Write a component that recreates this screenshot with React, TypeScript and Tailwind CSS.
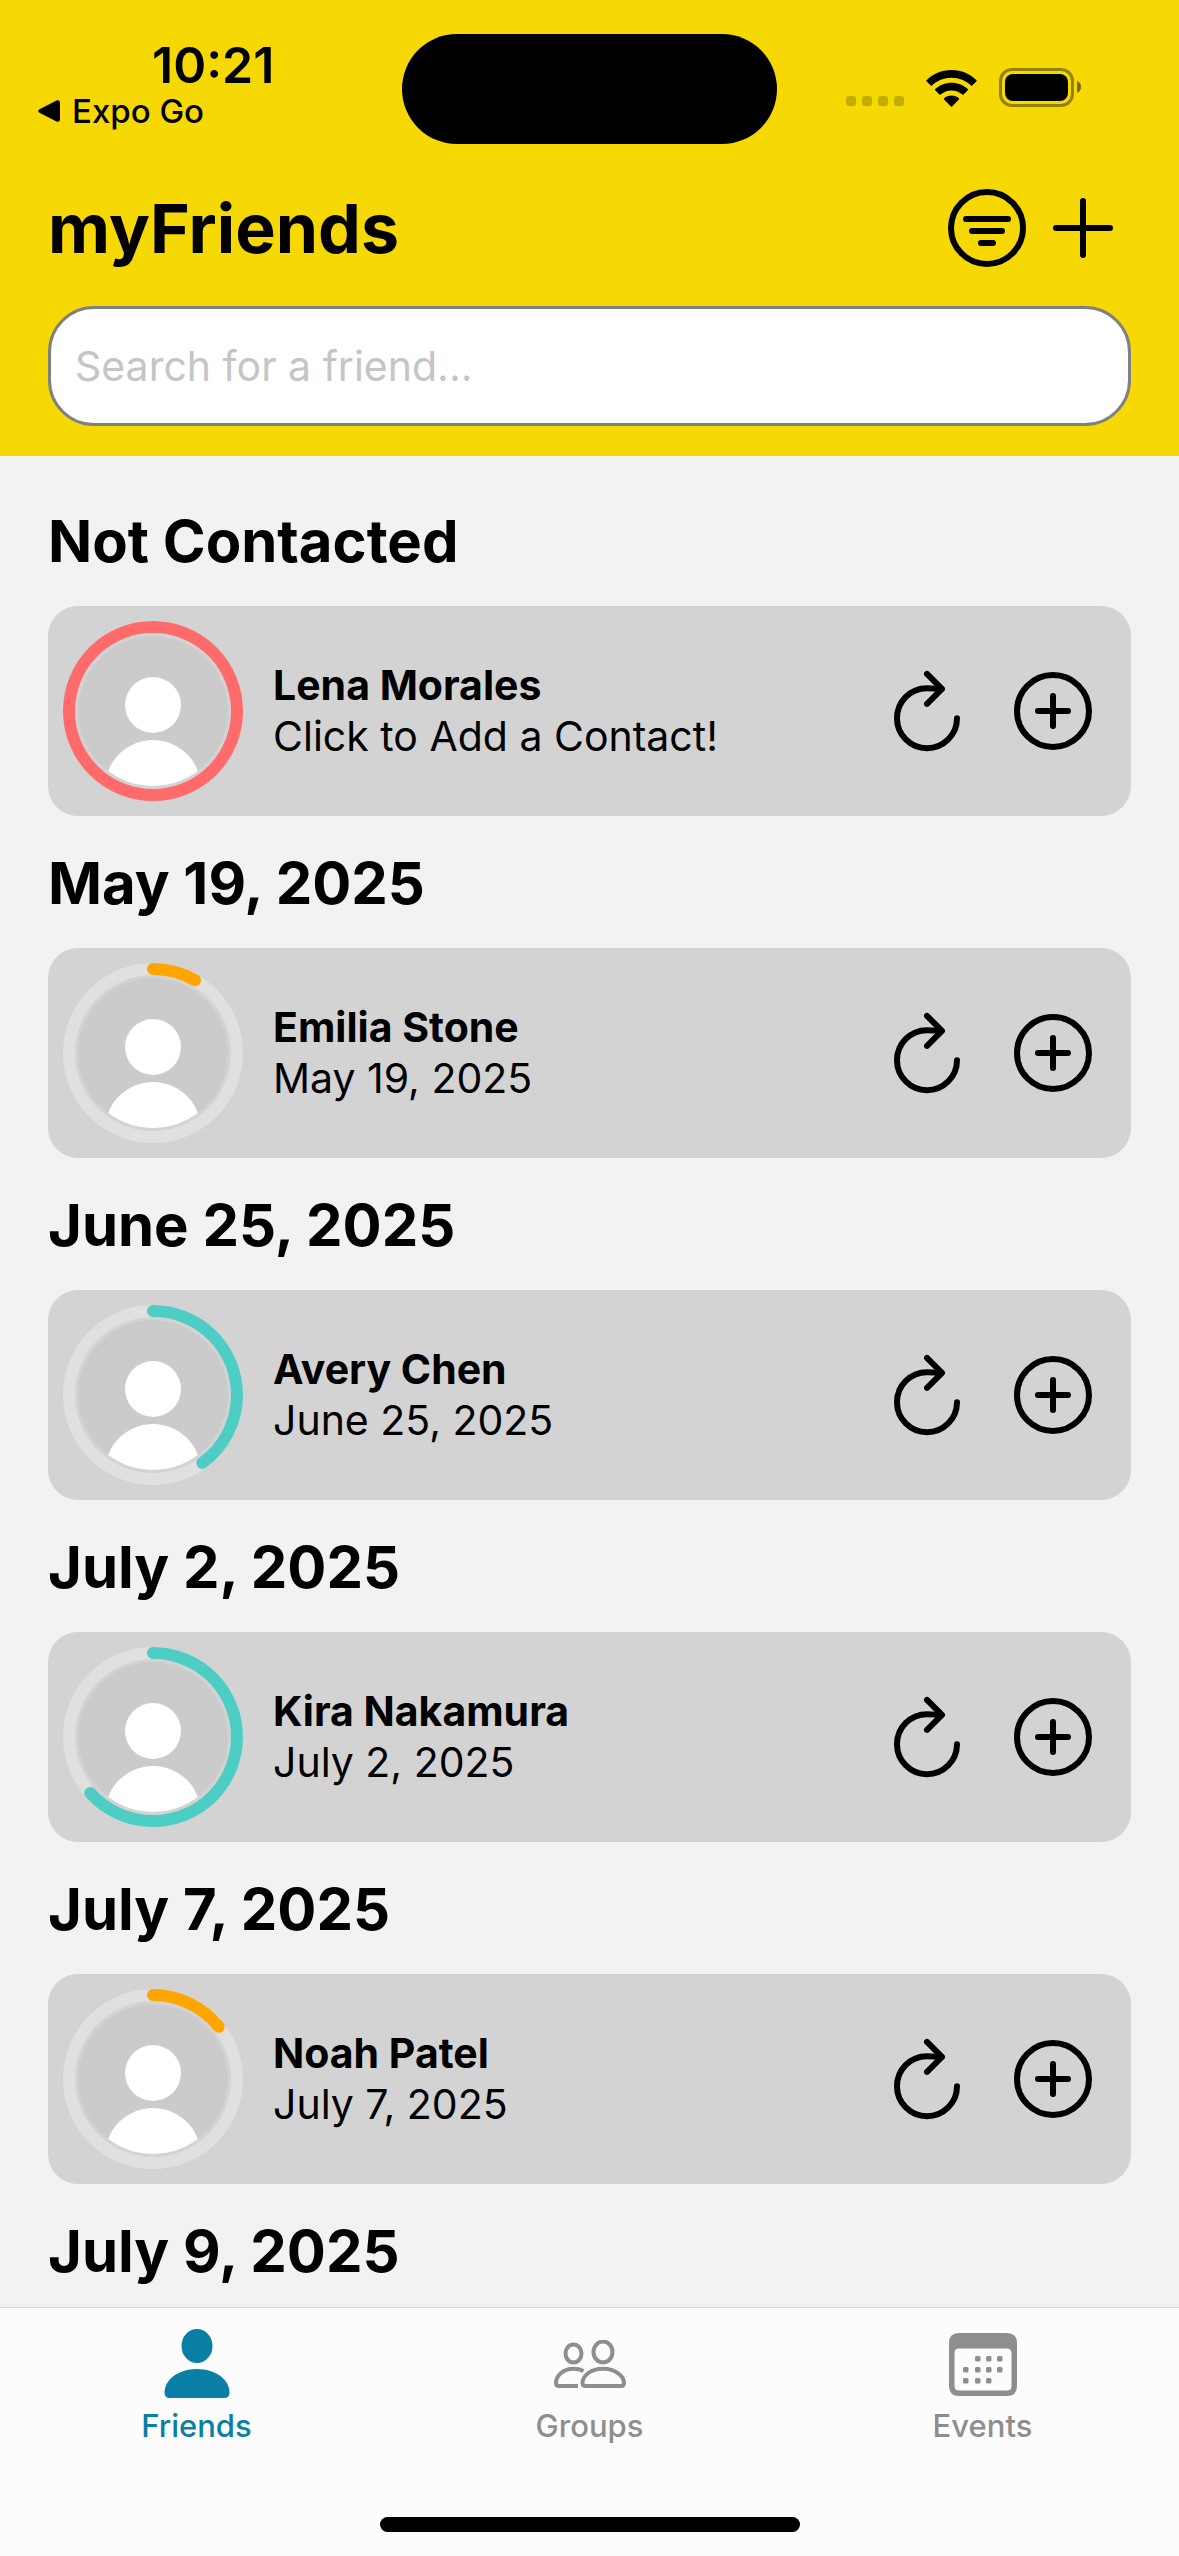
import {
  IoAddCircleOutline,
  IoAddOutline,
  IoFilterCircleOutline,
  IoRefreshOutline,
} from "react-icons/io5";

type Friend = {
  section: string;
  name: string;
  detail: string;
  progress: number;
  color: string;
};

const friends: Friend[] = [
  { section: "Not Contacted", name: "Lena Morales", detail: "Click to Add a Contact!", progress: 1, color: "#ff6b6b" },
  { section: "May 19, 2025", name: "Emilia Stone", detail: "May 19, 2025", progress: 0.0835, color: "#ffa500" },
  { section: "June 25, 2025", name: "Avery Chen", detail: "June 25, 2025", progress: 0.4, color: "#4ecdc4" },
  { section: "July 2, 2025", name: "Kira Nakamura", detail: "July 2, 2025", progress: 0.634, color: "#4ecdc4" },
  { section: "July 7, 2025", name: "Noah Patel", detail: "July 7, 2025", progress: 0.143, color: "#ffa500" },
];

function StatusBar() {
  return (
    <div className="grid h-[180px] grid-cols-[1fr_auto_1fr] items-start">
      <div className="flex flex-col pl-[38px] pt-[35px]">
        <span className="pl-[114px] text-[50px] leading-[60px] font-semibold">10:21</span>
        <a href="#expo" className="flex items-center gap-3 text-[33px] leading-[32px] font-medium">
          <svg viewBox="0 0 22 22" className="size-[22px]" aria-hidden="true">
            <path d="M1.5 9.2 18.5.6Q22 -.6 22 3v16q0 3.6-3.5 2.4L1.5 12.8Q-1 11 1.5 9.2z" />
          </svg>
          Expo Go
        </a>
      </div>
      <div className="mt-[34px] h-[110px] w-[375px] rounded-full bg-black" />
      <div className="flex items-end justify-end gap-[22px] pr-[98px] pt-[68px]">
        <div className="flex gap-[6px] pb-[1px]">
          <span className="size-[10px] rounded-[3px] bg-black/20" />
          <span className="size-[10px] rounded-[3px] bg-black/20" />
          <span className="size-[10px] rounded-[3px] bg-black/20" />
          <span className="size-[10px] rounded-[3px] bg-black/20" />
        </div>
        <svg viewBox="0 0 51 38" className="h-[38px] w-[51px]" aria-label="Wi-Fi">
          <path d="M25.500 1C35.500 1 44.300 5 50.500 11.200Q51 11.800 50.500 12.300L46.200 16.500Q45.700 17 45.100 16.500C40 11.700 33.100 8.800 25.500 8.800S11 11.700 5.900 16.500Q5.300 17 4.800 16.500L.5 12.300Q0 11.800 .5 11.200C6.700 5 15.500 1 25.500 1z" />
          <path d="M25.500 13.800c6.300 0 12 2.400 16.300 6.300q.6.600 0 1.200l-4.200 4.200q-.6.500-1.200 0C33.500 23 29.700 21.400 25.500 21.400S17.500 23 14.600 25.500q-.6.500-1.200 0L9.200 21.300q-.6-.6 0-1.200c4.300-3.900 10-6.300 16.300-6.300z" />
          <path d="M25.500 26.500c2.800 0 5.400 1 7.400 2.700q.6.500 0 1.200l-6.800 7q-.6.600-1.200 0l-6.800-7q-.6-.7 0-1.200c2-1.700 4.600-2.700 7.400-2.700z" />
        </svg>
        <svg viewBox="0 0 82 39" className="h-[39px] w-[82px]" aria-label="Battery">
          <rect x="1.500" y="1.500" width="72" height="36" rx="11.500" fill="none" stroke="#000" strokeOpacity=".4" strokeWidth="3" />
          <rect x="6" y="6" width="63" height="27" rx="8" />
          <path d="M78 13q4 1.500 4 6t-4 6z" fillOpacity=".5" />
        </svg>
      </div>
    </div>
  );
}

function Avatar({ progress, color }: { progress: number; color: string }) {
  return (
    <svg viewBox="-90 -90 180 180" className="size-[180px] shrink-0" aria-hidden="true">
      <defs>
        <clipPath id="face">
          <circle r="75" />
        </clipPath>
      </defs>
      <circle r="84" fill="none" stroke="#e0e0e0" strokeWidth="12" />
      <circle
        r="84"
        fill="none"
        stroke={color}
        strokeWidth="12"
        strokeLinecap="round"
        pathLength={100}
        strokeDasharray={progress === 1 ? undefined : `${progress * 100} 100`}
        transform="rotate(-90)"
      />
      <g clipPath="url(#face)">
        <circle r="75" fill="#cbcbcb" />
        <circle cy="-6" r="28" fill="#fff" />
        <circle cy="77" r="48" fill="#fff" />
      </g>
    </svg>
  );
}

function FriendCard({ friend }: { friend: Friend }) {
  return (
    <article className="flex items-center gap-[30px] rounded-[30px] bg-[#d3d3d3] py-[15px] pr-[30px] pl-[15px]">
      <Avatar progress={friend.progress} color={friend.color} />
      <div className="flex-1 text-[41px] leading-[51px]">
        <h3 className="font-bold">{friend.name}</h3>
        <p>{friend.detail}</p>
      </div>
      <button type="button" aria-label={`Refresh ${friend.name}`}>
        <IoRefreshOutline className="size-[96px]" />
      </button>
      <button type="button" aria-label={`Add contact for ${friend.name}`}>
        <IoAddCircleOutline className="size-[96px]" />
      </button>
    </article>
  );
}

function SectionTitle({ children }: { children: string }) {
  return <h2 className="pt-[31px] pb-[29px] text-[58px] leading-[72px] font-bold">{children}</h2>;
}

function FriendsIcon() {
  return (
    <svg viewBox="0 0 66 70" className="h-[70px] w-[66px]" fill="currentColor" aria-hidden="true">
      <ellipse cx="33" cy="17" rx="15.500" ry="17" />
      <path d="M6 69q-5.500 0-5.500-5.500C.5 51 14 40 33 40s32.500 11 32.500 23.500Q65.500 69 60 69z" />
    </svg>
  );
}

function GroupsIcon() {
  return (
    <svg viewBox="0 0 72 48" className="h-[48px] w-[72px]" fill="none" stroke="currentColor" strokeWidth="4" aria-hidden="true">
      <ellipse cx="19.500" cy="13.500" rx="8" ry="9" />
      <ellipse cx="49" cy="12" rx="9.500" ry="10.500" />
      <path d="M29.500 31C26.500 29.500 23 28.800 19.500 28.800 9 28.800 2 36 2 43q0 3 3 3H24" />
      <path d="M31.500 46q-3 0-3-3C28.500 36 36.500 28.800 49 28.800S70 36 70 43q0 3-3 3z" />
    </svg>
  );
}

function EventsIcon() {
  const dots = [
    [26, 23], [37, 23], [48, 23],
    [14, 34], [26, 34], [37, 34], [48, 34],
    [14, 45], [26, 45], [37, 45],
  ];
  return (
    <svg viewBox="0 0 68 63" className="h-[63px] w-[68px]" fill="currentColor" aria-hidden="true">
      <path
        fillRule="evenodd"
        d="M10 0h48q10 0 10 10v43q0 10-10 10H10Q0 63 0 53V10Q0 0 10 0zM10 15.500q-4.500 0-4.500 4.500v33q0 4.500 4.500 4.500h48q4.500 0 4.500-4.500V20q0-4.500-4.500-4.500z"
      />
      {dots.map(([x, y]) => (
        <rect key={`${x}-${y}`} x={x} y={y} width="5.500" height="5.500" rx="1.500" />
      ))}
    </svg>
  );
}

const tabs = [
  { label: "Friends", Icon: FriendsIcon, active: true },
  { label: "Groups", Icon: GroupsIcon, active: false },
  { label: "Events", Icon: EventsIcon, active: false },
];

function TabBar() {
  return (
    <footer className="flex flex-col items-center border-t border-[#d6d6d6] bg-[#fcfcfc] pb-6">
      <nav className="grid w-full grid-cols-3 pt-4">
        {tabs.map(({ label, Icon, active }) => (
          <a
            key={label}
            href={`#${label.toLowerCase()}`}
            aria-current={active ? "page" : undefined}
            className={
              active
                ? "flex flex-col items-center text-[31px] leading-[44px] font-medium text-[#0a7ea4]"
                : "flex flex-col items-center text-[31px] leading-[44px] font-medium text-[#8e8e8e]"
            }
          >
            <span className="flex h-[80px] items-center">
              <Icon />
            </span>
            {label}
          </a>
        ))}
      </nav>
      <div className="mt-[69px] h-[15px] w-[420px] rounded-full bg-black" />
    </footer>
  );
}

export default function App() {
  return (
    <div className="flex h-screen flex-col bg-[#f2f2f2] font-['Inter',sans-serif] text-black">
      <header className="bg-[#f6d804] pb-[30px]">
        <StatusBar />
        <div className="flex items-center px-[48px]">
          <h1 className="flex-1 text-[68px] leading-[84px] font-bold">myFriends</h1>
          <button type="button" aria-label="Filter friends">
            <IoFilterCircleOutline className="size-[96px]" />
          </button>
          <button type="button" aria-label="Add friend">
            <IoAddOutline className="size-[96px]" />
          </button>
        </div>
        <div className="px-[48px] pt-[30px]">
          <input
            type="text"
            aria-label="Search for a friend"
            placeholder="Search for a friend..."
            className="block h-[120px] w-full rounded-[46px] border-[3px] border-[#808080] bg-white px-6 text-[41px] placeholder:text-[#c5c5c7]"
          />
        </div>
      </header>
      <main className="min-h-0 flex-1 overflow-hidden px-[48px] pt-[18px]">
        {friends.map((friend) => (
          <section key={friend.name}>
            <SectionTitle>{friend.section}</SectionTitle>
            <FriendCard friend={friend} />
          </section>
        ))}
        <SectionTitle>July 9, 2025</SectionTitle>
      </main>
      <TabBar />
    </div>
  );
}
